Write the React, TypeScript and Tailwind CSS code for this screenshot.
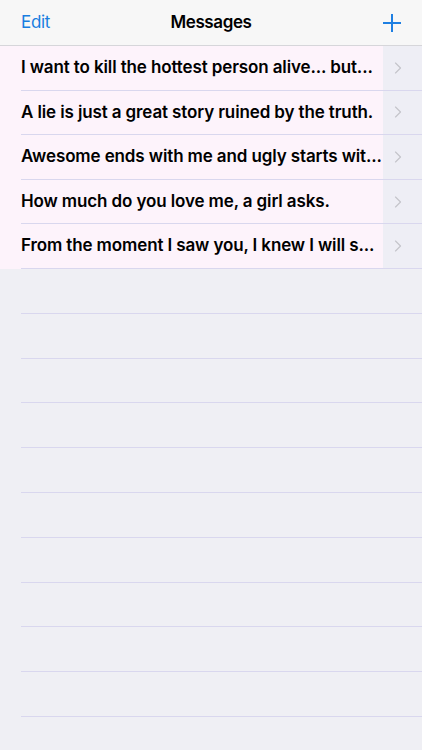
import { ChevronRight } from 'lucide-react'

// Shown exactly as the list cuts them off
const MESSAGES = [
  'I want to kill the hottest person alive... but...',
  'A lie is just a great story ruined by the truth.',
  'Awesome ends with me and ugly starts wit...',
  'How much do you love me, a girl asks.',
  'From the moment I saw you, I knew I will s...',
]

const EMPTY_ROWS = 10

export default function App() {
  return (
    <div
      className="h-[750px] w-[422px] overflow-hidden bg-[#efeff4]"
      style={{ fontFamily: 'Inter, "Liberation Sans", sans-serif' }}
    >
      {/* ── Nav bar ─────────────────────────────────────────── */}
      <div className="relative flex h-[46px] items-center justify-between border-b border-[#d6d6da] bg-[#f7f7f7] pl-[21px] pr-[20px]">
        <span className="text-[17px] tracking-[-0.3px] text-[#187ee0]">Edit</span>
        <span className="absolute left-1/2 -translate-x-1/2 text-[17px] font-semibold tracking-[-0.4px] text-black">
          Messages
        </span>
        <svg width="20" height="20" viewBox="0 0 20 20" className="text-[#1e7fe2]">
          <path d="M10 1v18M1 10h18" stroke="currentColor" strokeWidth="2" />
        </svg>
      </div>

      {/* ── Message rows ────────────────────────────────────── */}
      <div className="flex flex-col">
        {MESSAGES.map((m, i) => (
          <div key={i} className="flex h-[44.6px]">
            <div className="flex min-w-0 flex-1 bg-[#fdf3fb] pl-[21px]">
              <div className="flex min-w-0 flex-1 items-center border-b border-[#d9d7ee]">
                <span className="whitespace-nowrap text-[17px] font-semibold tracking-[-0.12px] text-black">
                  {m}
                </span>
              </div>
            </div>
            <div className="flex w-[39px] shrink-0 items-center justify-center border-b border-[#d9d7ee] bg-[#eeeef5] pr-[10px]">
              <ChevronRight className="h-[20px] w-[20px] text-[#c4c4ca]" strokeWidth={1.4} />
            </div>
          </div>
        ))}

        {Array.from({ length: EMPTY_ROWS }).map((_, i) => (
          <div key={i} className="h-[44.8px] pl-[21px]">
            <div className="h-full border-b border-[#d9d7ee]" />
          </div>
        ))}
      </div>
    </div>
  )
}
